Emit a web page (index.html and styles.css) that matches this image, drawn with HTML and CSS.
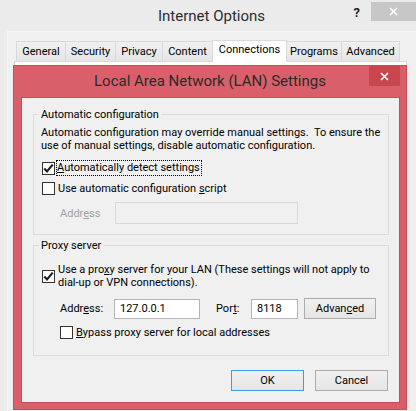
FILE: index.html
```html
<!DOCTYPE html>
<html lang="en">
  <head>
    <meta charset="UTF-8" />
    <title>Internet Options</title>
    <link rel="stylesheet" href="styles.css">
  </head>
  <body>
    <div class="window">
      <div class="titlebar">
        <span></span>
        <span class="title">Internet Options</span>
        <div class="caption-btns">
          <span class="help">?</span>
          <span class="close">
            <svg width="9" height="9" viewBox="0 0 9 9"><path d="M1 1L8 8M8 1L1 8" stroke="#fff" stroke-width="1.6"/></svg>
          </span>
        </div>
      </div>

      <div class="client">
        <div class="tabs">
          <span class="tab">General</span>
          <span class="tab">Security</span>
          <span class="tab">Privacy</span>
          <span class="tab">Content</span>
          <span class="tab active">Connections</span>
          <span class="tab">Programs</span>
          <span class="tab">Advanced</span>
        </div>
        <div class="panel"></div>
      </div>

      <!-- child dialog on top of the options window -->
      <div class="lan">
        <div class="lan-title">
          <span class="lan-caption">Local Area Network (LAN) Settings</span>
          <span class="lan-close">
            <svg width="9" height="9" viewBox="0 0 9 9"><path d="M1 1L8 8M8 1L1 8" stroke="#fff" stroke-width="1.6"/></svg>
          </span>
        </div>

        <div class="lan-body">
          <fieldset class="group group-auto">
            <legend>Automatic configuration</legend>
            <p class="desc">Automatic configuration may override manual settings.&nbsp; To ensure the use of manual settings, disable automatic configuration.</p>

            <div class="check-row first">
              <span class="box checked">
                <svg width="11" height="11" viewBox="0 0 11 11"><path d="M1.3 5.6L4 8.4L9.7 1.6" fill="none" stroke="#1e1e1e" stroke-width="2.2"/></svg>
              </span>
              <span class="focus"><u>A</u>utomatically detect settings</span>
            </div>

            <div class="check-row">
              <span class="box"></span>
              <span>Use automatic configuration <u>s</u>cript</span>
            </div>

            <div class="addr-row">
              <span class="addr-label disabled">Addr<u>e</u>ss</span>
              <span class="field field-disabled"></span>
            </div>
          </fieldset>

          <fieldset class="group group-proxy">
            <legend>Proxy server</legend>

            <div class="check-row multi">
              <span class="box checked">
                <svg width="11" height="11" viewBox="0 0 11 11"><path d="M1.3 5.6L4 8.4L9.7 1.6" fill="none" stroke="#1e1e1e" stroke-width="2.2"/></svg>
              </span>
              <span class="lines">
                <span>Use a pro<u>x</u>y server for your LAN (These settings will not apply to</span>
                <span>dial-up or VPN connections).</span>
              </span>
            </div>

            <div class="proxy-row">
              <span class="addr-label">Addr<u>e</u>ss:</span>
              <span class="field field-ip">127.0.0.1</span>
              <span class="port-label">Por<u>t</u>:</span>
              <span class="field field-port">8118</span>
              <span class="btn btn-adv">Advan<u>c</u>ed</span>
            </div>

            <div class="check-row bypass">
              <span class="box"></span>
              <span><u>B</u>ypass proxy server for local addresses</span>
            </div>
          </fieldset>

          <div class="actions">
            <span class="btn btn-default">OK</span>
            <span class="btn">Cancel</span>
          </div>
        </div>
      </div>
    </div>
  </body>
</html>
```

FILE: styles.css
```css
* {
  box-sizing: border-box;
  margin: 0;
  padding: 0;
}

body {
  font-family: Roboto, "Liberation Sans", sans-serif;
  font-size: 11px;
  color: #000;
  background: #ebebeb;
}

.window {
  position: relative;
  width: 416px;
  height: 411px;
  overflow: hidden;
  background: #ebebeb;
}

/* outer caption */
.titlebar {
  height: 31px;
  display: grid;
  grid-template-columns: 1fr auto 1fr;
  align-items: start;
}

.title {
  padding-top: 5px;
  padding-left: 7px;
  font-size: 15px;
  color: #2b2b2b;
  line-height: 22px;
}

.caption-btns {
  display: flex;
  justify-content: flex-end;
  align-items: flex-start;
  padding-top: 2px;
}

.help {
  margin-top: 4px;
  margin-right: 11px;
  font-weight: bold;
  font-size: 13px;
  line-height: 14px;
  color: #222;
}

.close {
  width: 45px;
  height: 19px;
  background: #c7c7c7;
  display: flex;
  align-items: center;
  justify-content: center;
}

.client {
  margin-left: 7px;
  height: 380px;
  border-left: 1px solid #f7f7f7;
  border-top: 1px solid #f7f7f7;
  background: #f0f0f0;
  padding: 7px 0 0 6px;
}

.tabs {
  display: flex;
  align-items: flex-end;
  padding-left: 2px;
  height: 22px;
}

.tab {
  height: 20px;
  line-height: 19px;
  border: 1px solid #d9d9d9;
  border-bottom: none;
  background: linear-gradient(#f0f0f0, #e5e5e5);
  margin-right: -1px;
  text-align: center;
}

.tab:nth-child(1) { width: 50px; }
.tab:nth-child(2) { width: 51px; }
.tab:nth-child(3) { width: 48px; }
.tab:nth-child(4) { width: 51px; }
.tab:nth-child(6) { width: 56px; }
.tab:nth-child(7) { width: 59px; }

.tab.active {
  width: 75px;
  height: 22px;
  line-height: 18px;
  background: #fff;
  position: relative;
  z-index: 1;
  margin-bottom: -1px;
}

.panel {
  width: 393px;
  height: 340px;
  background: #fff;
  border: 1px solid #d9d9d9;
}

/* LAN settings dialog */
.lan {
  position: absolute;
  left: 13px;
  top: 65px;
  width: 394px;
  height: 345px;
  background: #d9606a;
  border: 1px solid #c24f58;
  padding: 0 6px 6px 7px;
  display: flex;
  flex-direction: column;
}

.lan-title {
  height: 31px;
  display: flex;
  justify-content: flex-end;
}

.lan-caption {
  flex: 1;
  text-align: center;
  font-size: 15px;
  line-height: 20px;
  padding-top: 5px;
  padding-left: 30px;
  color: #2b2b2b;
}

.lan-close {
  width: 31px;
  height: 20px;
  background: #c8474f;
  display: flex;
  align-items: center;
  justify-content: center;
}

.lan-body {
  flex: 1;
  background: #f0f0f0;
  border: 1px solid #c24f58;
  padding-top: 9px;
}

.group {
  margin: 0 10px 0 11px;
  border: 1px solid #dcdcdc;
  padding: 0 7px 10px;
}

.group legend {
  padding: 0 2px;
  margin-left: -2px;
  line-height: 15px;
  color: #000;
}

.group-proxy {
  margin-top: 3px;
  padding-bottom: 15px;
}

.desc {
  padding-top: 4px;
  line-height: 13px;
}

.check-row {
  display: flex;
  align-items: center;
  height: 16px;
  margin-top: 4px;
  padding-left: 1px;
}

.check-row.first {
  margin-top: 8px;
}

.check-row.multi {
  height: 26px;
  margin-top: 10px;
  line-height: 13px;
}

.lines span {
  display: block;
}

.check-row.bypass {
  margin-top: 5px;
  padding-left: 19px;
}

.box {
  flex: none;
  width: 13px;
  height: 13px;
  border: 1px solid #333;
  background: #fff;
  margin-right: 3px;
  display: flex;
  align-items: center;
  justify-content: center;
}

.focus {
  outline: 1px dotted #000;
  line-height: 14px;
  padding-right: 1px;
  margin-left: -1px;
}

.addr-row {
  display: flex;
  align-items: center;
  margin-top: 6px;
  padding-left: 19px;
}

.addr-label {
  width: 55px;
}

.disabled {
  color: #a0a0a0;
}

.field {
  height: 20px;
  border: 1px solid #b4b4b4;
  background: #fff;
  line-height: 18px;
  padding-left: 5px;
}

.field-disabled {
  width: 183px;
  height: 22px;
  background: #f0f0f0;
  border-color: #d9d9d9;
}

.proxy-row {
  display: flex;
  align-items: center;
  height: 21px;
  margin-top: 9px;
  padding-left: 19px;
}

.proxy-row .addr-label {
  width: 54px;
}

.field-ip {
  width: 86px;
}

.port-label {
  margin-left: 16px;
  width: 35px;
}

.field-port {
  width: 47px;
}

.btn {
  display: flex;
  align-items: center;
  justify-content: center;
  width: 73px;
  height: 21px;
  border: 1px solid #acacac;
  background: linear-gradient(#f0f0f0, #e5e5e5);
}

.btn-adv {
  width: 72px;
  margin-left: 6px;
}

.btn-default {
  border-color: #3d9ae6;
}

.actions {
  display: flex;
  justify-content: flex-end;
  gap: 11px;
  margin-top: 14px;
  padding-right: 11px;
}
```
